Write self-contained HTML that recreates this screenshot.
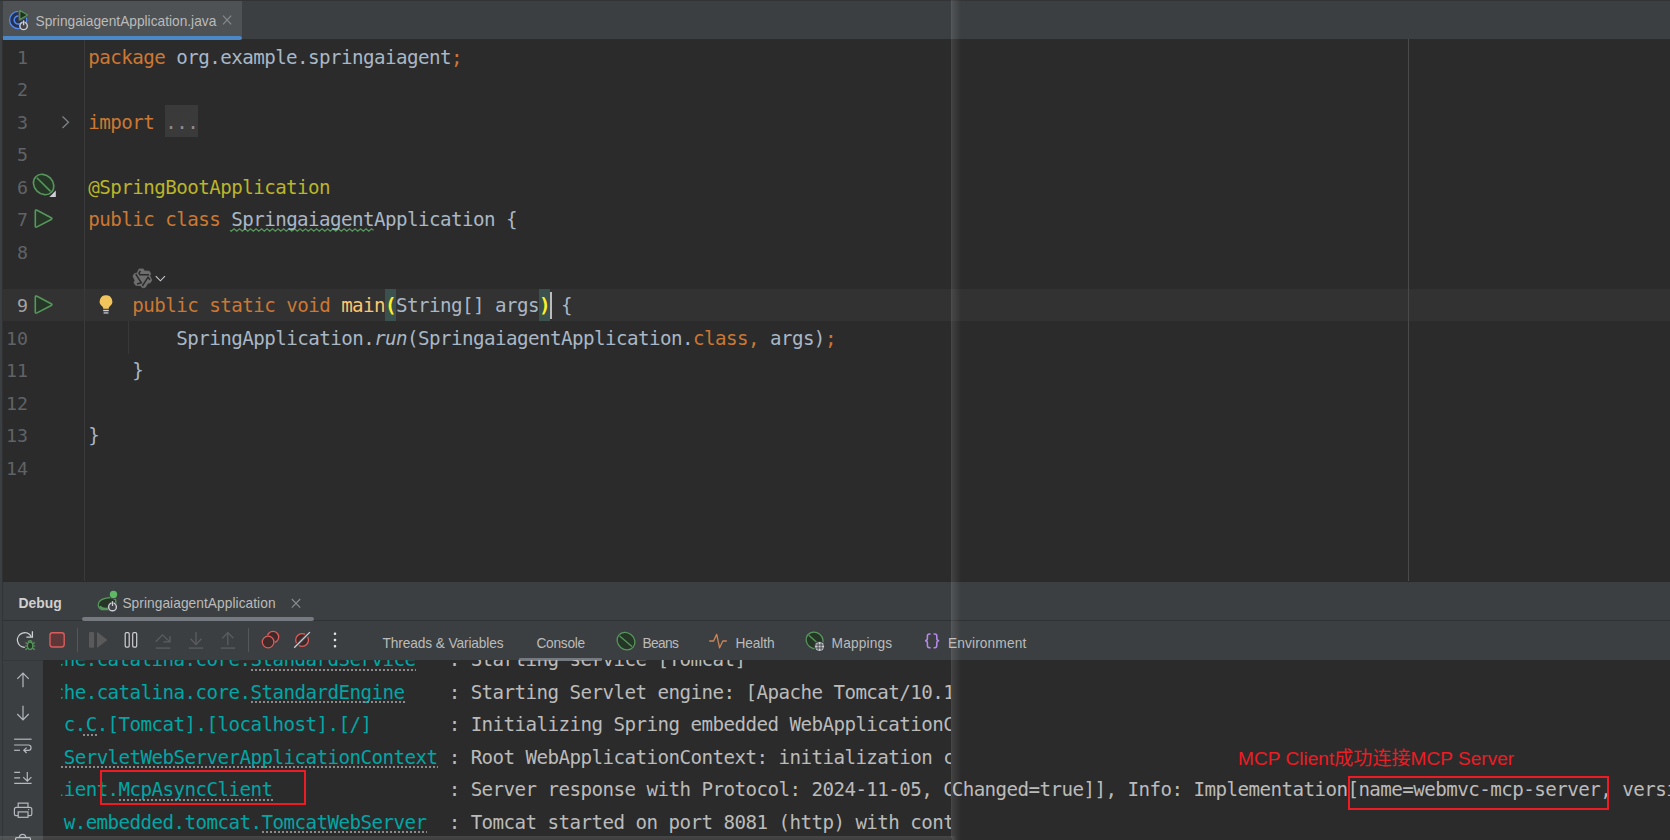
<!DOCTYPE html>
<html lang="en">
<head>
<meta charset="utf-8">
<title>SpringaiagentApplication</title>
<style>
html,body{margin:0;padding:0;}
body{width:1670px;height:840px;overflow:hidden;background:#2b2b2b;position:relative;font-family:"Liberation Sans","Noto Sans CJK SC",sans-serif;}
#root{position:absolute;left:0;top:0;width:1670px;height:840px;overflow:hidden;background:#2b2b2b;}
.abs,#root div,#root svg{position:absolute;}
.ui{font-family:"Liberation Sans",sans-serif;color:#bbbbbb;white-space:pre;line-height:18px;height:18px;}
.code,.ln,.con{font-family:"DejaVu Sans Mono","Liberation Mono",monospace;font-size:18.27px;line-height:32px;height:32px;white-space:pre;}
.code,.con{font-size:19.2px;letter-spacing:-0.559px;}
.code{color:#a9b7c6;z-index:2;}
.ln{color:#606366;width:22px;left:6px;text-align:right;}
.con{color:#bbbbbb;}
.k{color:#cc7832;}
.an{color:#bbb529;}
.fn{color:#ffc66d;}
.it{font-style:italic;}
.pb{color:#ffef28;font-weight:bold;}
.cy{color:#00a6a6;}
.dot{height:2px;background-image:repeating-linear-gradient(90deg,#8a8a8a 0,#8a8a8a 2px,transparent 2px,transparent 4px);}
svg{overflow:visible;}
</style>
</head>
<body>
<div id="root">

<!-- ===== TAB BAR ===== -->
<div style="left:0;top:0;width:1670px;height:39px;background:#3c3f41;"></div>
<div style="left:0;top:0;width:1670px;height:1px;background:#323435;"></div>
<div style="left:3px;top:1px;width:239px;height:35px;background:#4e5254;"></div>
<div id="tabul" style="left:3px;top:36px;width:239px;height:4px;background:#4a88c7;border-radius:0 2px 2px 0;z-index:3;"></div>
<div class="ui" id="t_tab" style="left:35.5px;top:13px;font-size:13.72px;color:#bbbbbb;">SpringaiagentApplication.java</div>
<svg style="left:0;top:0;" width="250" height="40" viewBox="0 0 250 40">
  <!-- class icon -->
  <circle cx="18.2" cy="20" r="8.6" fill="#25324d" stroke="#548af7" stroke-width="1.3"/>
  <path d="M21.6 17.6 A4.1 4.1 0 1 0 21.6 22.4" fill="none" stroke="#548af7" stroke-width="1.5"/>
  <path d="M19.8 10.6 L19.8 19.6 L27.6 15.1 Z" fill="#4e5254" stroke="#4e5254" stroke-width="3.2" stroke-linejoin="round"/>
  <path d="M19.8 10.6 L19.8 19.6 L27.6 15.1 Z" fill="#20301f" stroke="#57965c" stroke-width="1.2" stroke-linejoin="round"/>
  <circle cx="23.6" cy="25.9" r="4.6" fill="#4e5254"/>
  <circle cx="23.6" cy="25.9" r="3.7" fill="#43454a" stroke="#ced0d6" stroke-width="1.4"/>
  <rect x="22.6" y="20.2" width="2" height="5.2" fill="#4e5254"/>
  <path d="M23.6 20.4 L23.6 25.2" stroke="#ced0d6" stroke-width="1.3"/>
  <!-- close -->
  <path d="M223 15.6 L231.2 24.4 M231.2 15.6 L223 24.4" stroke="#8a8d8f" stroke-width="1.1" fill="none"/>
</svg>

<!-- ===== EDITOR ===== -->
<div style="left:0;top:39px;width:1670px;height:542px;background:#2b2b2b;"></div>
<div style="left:3px;top:289px;width:1667px;height:32px;background:#323232;"></div>
<div style="left:84px;top:39px;width:1px;height:542px;background:#3a3a3a;"></div>
<div style="left:128px;top:321px;width:1px;height:33px;background:#383838;"></div>
<div style="left:1408px;top:39px;width:1px;height:542px;background:#4a4a4a;"></div>
<!-- line numbers -->
<div class="ln" style="top:41.7px;">1</div>
<div class="ln" style="top:74.2px;">2</div>
<div class="ln" style="top:106.7px;">3</div>
<div class="ln" style="top:139.2px;">5</div>
<div class="ln" style="top:171.7px;">6</div>
<div class="ln" style="top:204.2px;">7</div>
<div class="ln" style="top:236.7px;">8</div>
<div class="ln" style="top:290.2px;color:#a4a3a3;">9</div>
<div class="ln" style="top:322.7px;">10</div>
<div class="ln" style="top:355.2px;">11</div>
<div class="ln" style="top:387.7px;">12</div>
<div class="ln" style="top:420.2px;">13</div>
<div class="ln" style="top:452.7px;">14</div>
<!-- code -->
<div class="code" style="left:88.25px;top:41.5px;"><span class="k">package</span> org.example.springaiagent<span class="k">;</span></div>
<div style="left:165px;top:105px;width:33px;height:32px;background:#3a3a3a;"></div>
<div class="code" style="left:88.25px;top:106.5px;"><span class="k">import</span> <span style="color:#8c8c8c;">...</span></div>
<div class="code" style="left:88.25px;top:171.5px;"><span class="an">@SpringBootApplication</span></div>
<div class="code" style="left:88.25px;top:204.0px;"><span class="k">public class</span> SpringaiagentApplication {</div>
<div style="left:385px;top:289px;width:11px;height:32px;background:#3b514d;"></div>
<div style="left:539px;top:289px;width:11px;height:32px;background:#3b514d;"></div>
<div class="code" style="left:132.25px;top:290.0px;"><span class="k">public static void</span> <span class="fn">main</span><span class="pb">(</span>String[] args<span class="pb">)</span> {</div>
<div style="left:550px;top:292px;width:2px;height:27px;background:#bbbbbb;"></div>
<div class="code" style="left:176.25px;top:322.5px;">SpringApplication.<span class="it">run</span>(SpringaiagentApplication.<span class="k">class,</span> args)<span class="k">;</span></div>
<div class="code" style="left:132.25px;top:355.0px;">}</div>
<div class="code" style="left:88.25px;top:420.0px;">}</div>

<svg style="left:0;top:0;" width="600" height="581" viewBox="0 0 600 581">
  <!-- fold arrow -->
  <path d="M62.5 116.5 L68.5 122.3 L62.5 128" fill="none" stroke="#7f8388" stroke-width="1.3"/>
  <!-- typo wave -->
  <path d="M230 230.3 L231.3 231.3 L234.05 228.8 L236.80 231.3 L239.55 228.8 L242.30 231.3 L245.05 228.8 L247.80 231.3 L250.55 228.8 L253.30 231.3 L256.05 228.8 L258.80 231.3 L261.55 228.8 L264.30 231.3 L267.05 228.8 L269.80 231.3 L272.55 228.8 L275.30 231.3 L278.05 228.8 L280.80 231.3 L283.55 228.8 L286.30 231.3 L289.05 228.8 L291.80 231.3 L294.55 228.8 L297.30 231.3 L300.05 228.8 L302.80 231.3 L305.55 228.8 L308.30 231.3 L311.05 228.8 L313.80 231.3 L316.55 228.8 L319.30 231.3 L322.05 228.8 L324.80 231.3 L327.55 228.8 L330.30 231.3 L333.05 228.8 L335.80 231.3 L338.55 228.8 L341.30 231.3 L344.05 228.8 L346.80 231.3 L349.55 228.8 L352.30 231.3 L355.05 228.8 L357.80 231.3 L360.55 228.8 L363.30 231.3 L366.05 228.8 L368.80 231.3 L371.55 228.8 L373.6 230.4" fill="none" stroke="#59995f" stroke-width="1.2" stroke-linejoin="miter"/>
  <!-- bean gutter icon line 6 -->
  <g>
    <ellipse cx="43.6" cy="184.5" rx="11" ry="9.3" transform="rotate(45 43.6 184.5)" fill="#253627" stroke="#57965c" stroke-width="1.6"/>
    <path d="M36.8 177.8 L50.6 191.4" stroke="#57965c" stroke-width="1.6"/>
    <path d="M55.8 190.4 L55.8 197 L49.4 197 Z" fill="#ced0d6"/>
  </g>
  <!-- run gutter icons -->
  <path d="M35.3 211.2 L35.3 226.0 Q35.3 227.79999999999998 37 226.89999999999998 L51.2 219.5 Q52.8 218.6 51.2 217.7 L37 210.3 Q35.3 209.4 35.3 211.2 Z" fill="#253627" stroke="#57965c" stroke-width="1.6" stroke-linejoin="round"/>
  <path d="M35.3 297.2 L35.3 312.0 Q35.3 313.8 37 312.9 L51.2 305.5 Q52.8 304.6 51.2 303.70000000000005 L37 296.3 Q35.3 295.4 35.3 297.2 Z" fill="#253627" stroke="#57965c" stroke-width="1.6" stroke-linejoin="round"/>
  <!-- bulb -->
  <g>
    <path d="M106 295.2 a6.2 6.2 0 0 1 3.6 11.3 q-0.9 0.7 -0.9 2.3 l-5.4 0 q0 -1.6 -0.9 -2.3 a6.2 6.2 0 0 1 3.6 -11.3 Z" fill="#f2c55c"/>
    <rect x="103.2" y="309.8" width="5.6" height="1.4" fill="#ced0d6"/>
    <rect x="103.6" y="311.9" width="4.8" height="1.9" fill="#9da0a8"/>
  </g>
  <!-- inlay hint icon -->
  <path d="M139 269 L143.3 269 L144.3 271 L149.3 271.2 L150.7 273.7 L149.7 275.7 L151.8 280 L150.3 282.7 L147.7 283.3 L145.3 287.3 L142.3 287.8 L141 285.7 L135.7 285.3 L134 282.7 L135 280.3 L133 276.3 L134.3 273.7 L137.3 273 Z" fill="#6e6e6e" stroke="#6e6e6e" stroke-width="0.8" stroke-linejoin="round"/>
  <g stroke="#2b2b2b" stroke-width="1.5" fill="none" stroke-linejoin="miter">
    <path d="M140.4 270.8 L139 273 L139.8 274.7 L149 274.7"/>
    <path d="M135.8 274.2 L141.3 282.8 L137 284"/>
    <path d="M150 279.8 L148 277.2 L142.4 286"/>
  </g>
  <path d="M155.8 276.2 L160.4 280.8 L165 276.2" fill="none" stroke="#c8cad0" stroke-width="1.1"/>
</svg>

<!-- ===== DEBUG PANEL ===== -->
<div style="left:0;top:581px;width:1670px;height:259px;background:#3c3f41;"></div>
<div style="left:2px;top:581px;width:1668px;height:1px;background:#292a2b;"></div>
<div style="left:43px;top:660px;width:1627px;height:180px;background:#2b2b2b;"></div>
<div style="left:3px;top:620px;width:1667px;height:1px;background:#2f3133;"></div>
<div style="left:3px;top:660px;width:40px;height:1px;background:#35383a;"></div>
<div class="ui" id="t_debug" style="left:18.5px;top:594px;font-size:13.9px;font-weight:bold;color:#d0d0d0;">Debug</div>
<div class="ui" id="t_dtab" style="left:122.4px;top:594.5px;font-size:13.72px;letter-spacing:0.06px;">SpringaiagentApplication</div>
<div style="left:82px;top:617px;width:232px;height:4px;background:#747a80;border-radius:2px;"></div>
<div class="ui" id="t_thr" style="left:382.4px;top:634.7px;font-size:13.72px;letter-spacing:-0.11px;">Threads &amp; Variables</div>
<div class="ui" id="t_con" style="left:536.4px;top:634.7px;font-size:13.72px;letter-spacing:-0.25px;">Console</div>
<div class="ui" id="t_bea" style="left:642.5px;top:634.7px;font-size:13.72px;letter-spacing:-0.66px;">Beans</div>
<div class="ui" id="t_hea" style="left:735.4px;top:634.7px;font-size:13.72px;letter-spacing:-0.08px;">Health</div>
<div class="ui" id="t_map" style="left:831.6px;top:634.7px;font-size:13.72px;letter-spacing:0.14px;">Mappings</div>
<div class="ui" id="t_env" style="left:948px;top:634.7px;font-size:13.72px;letter-spacing:0.12px;">Environment</div>
<div style="left:519px;top:658px;width:83px;height:2.5px;background:#747a80;border-radius:1px;"></div>
<!-- console (left capture) -->
<div id="conL" style="left:61px;top:660px;width:890px;height:180px;overflow:hidden;">
<div class="con cy" style="left:-8.35px;top:-16.0px;">che.catalina.core.StandardService</div>
<div class="dot" style="left:190px;top:8.5px;width:165px;"></div>
<div class="con" style="left:387.65px;top:-16.0px;">: Starting service [Tomcat]</div>
<div class="con cy" style="left:-8.35px;top:16.5px;">che.catalina.core.StandardEngine</div>
<div class="dot" style="left:190px;top:41px;width:154px;"></div>
<div class="con" style="left:387.65px;top:16.5px;">: Starting Servlet engine: [Apache Tomcat/10.1.40]</div>
<div class="con cy" style="left:-8.35px;top:49.0px;">.c.C.[Tomcat].[localhost].[/]</div>
<div class="dot" style="left:22px;top:73.5px;width:14px;"></div>
<div class="con" style="left:387.65px;top:49.0px;">: Initializing Spring embedded WebApplicationContext</div>
<div class="con cy" style="left:-8.35px;top:81.5px;">.ServletWebServerApplicationContext</div>
<div class="dot" style="left:0px;top:106px;width:377px;"></div>
<div class="con" style="left:387.65px;top:81.5px;">: Root WebApplicationContext: initialization completed</div>
<div class="con cy" style="left:-8.35px;top:114.0px;">lient.McpAsyncClient</div>
<div class="dot" style="left:58px;top:138.5px;width:154px;"></div>
<div class="con" style="left:387.65px;top:114.0px;">: Server response with Protocol: 2024-11-05, Capabilities</div>
<div class="con cy" style="left:2.65px;top:146.5px;">w.embedded.tomcat.TomcatWebServer</div>
<div class="dot" style="left:201px;top:171px;width:165px;"></div>
<div class="con" style="left:387.65px;top:146.5px;">: Tomcat started on port 8081 (http) with context path</div>
</div>
<!-- console (right capture) -->
<div id="conR" style="left:951px;top:660px;width:719px;height:180px;overflow:hidden;">
<div class="con" style="left:0.65px;top:114.0px;">Changed=true]], Info: Implementation[name=webmvc-mcp-server, version=1.0.0]</div>
</div>

<!-- annotations -->
<div style="left:100px;top:770px;width:202px;height:31px;border:2px solid #ed1c24;"></div>
<div style="left:1348px;top:775.5px;width:257px;height:30px;border:2px solid #ed1c24;"></div>
<div id="t_red" style="left:1238px;top:746px;font-family:'Liberation Sans','Noto Sans CJK SC',sans-serif;font-size:19.1px;line-height:26px;height:26px;white-space:pre;color:#ed1c24;">MCP Client成功连接MCP Server</div>

<svg style="left:0;top:581px;" width="1100" height="259" viewBox="0 581 1100 259">
  <!-- debug tab icon -->
  <path d="M110.8 597.5 C104.5 598 100.4 598.9 98.9 602.2 C97.5 605.4 98.6 608.5 101.6 609.6 L109 609.6 L116 604.4 L115.6 599.6 Z" fill="#253627" stroke="#57965c" stroke-width="1.3" stroke-linejoin="round"/>
  <path d="M99.8 606.2 C101.6 609.2 104.4 609.3 109.4 608.4" stroke="#57965c" stroke-width="2.2" fill="none"/>
  <circle cx="113.5" cy="594.5" r="4.7" fill="#3c3f41"/>
  <circle cx="113.5" cy="594.5" r="3.7" fill="#5fb865"/>
  <circle cx="112.5" cy="606.9" r="5" fill="#3c3f41"/>
  <circle cx="112.5" cy="606.9" r="3.9" fill="#43454a" stroke="#ced0d6" stroke-width="1.4"/>
  <rect x="111.4" y="600.8" width="2.2" height="5.4" fill="#3c3f41"/>
  <path d="M112.5 601.2 L112.5 606" stroke="#ced0d6" stroke-width="1.3"/>
  <path d="M291.8 599 L300.2 607.6 M300.2 599 L291.8 607.6" stroke="#8a8d90" stroke-width="1.1" fill="none"/>

  <!-- rerun -->
  <path d="M24.8 647.3 A7.3 7.3 0 1 1 31.2 636.6" fill="none" stroke="#ced0d6" stroke-width="1.3"/>
  <path d="M32.4 631.2 L32.4 637.2 L26.4 637.2" fill="none" stroke="#ced0d6" stroke-width="1.3"/>
  <g stroke="#57965c" stroke-width="1.2" fill="none">
    <path d="M25.4 642.6 L27.6 644 M25 646 L27.4 646 M25.4 649.8 L27.6 648 M34.8 642.6 L32.6 644 M35.2 646 L32.8 646 M34.8 649.8 L32.6 648"/>
    <path d="M28.2 642 A2 2 0 0 1 32 642"/>
  </g>
  <ellipse cx="30.1" cy="645.8" rx="2.7" ry="3.6" fill="#253627" stroke="#57965c" stroke-width="1.3"/>
  <!-- stop -->
  <rect x="50" y="632.8" width="14.2" height="14.2" rx="2.4" fill="#5e3838" stroke="#db5c5c" stroke-width="1.4"/>
  <rect x="77" y="628" width="1" height="24" fill="#55585a"/>
  <!-- resume (disabled) -->
  <rect x="89" y="632.1" width="5.1" height="15.6" rx="1.2" fill="#5a5a5a"/>
  <path d="M97 633 Q97 632 98 632.6 L106.8 639.4 Q107.4 640 106.8 640.5 L98 647.3 Q97 647.9 97 646.9 Z" fill="#5a5a5a"/>
  <!-- pause -->
  <rect x="125.2" y="632.7" width="4" height="14.4" rx="1.4" fill="#34363a" stroke="#ced0d6" stroke-width="1.2"/>
  <rect x="132.7" y="632.7" width="4" height="14.4" rx="1.4" fill="#34363a" stroke="#ced0d6" stroke-width="1.2"/>
  <!-- step over/into/out (disabled) -->
  <g stroke="#5b5d5f" stroke-width="1.3" fill="none">
    <path d="M155.8 641.8 L162.5 634.9 L169.6 641.6"/>
    <path d="M170 636 L170 641.8 L163.4 641.8"/>
    <path d="M155.7 648.1 L170.4 648.1"/>
    <path d="M196 632 L196 644.6"/>
    <path d="M190.6 638.8 L196 644.6 L201.4 638.8"/>
    <path d="M188.8 648.1 L203.2 648.1"/>
    <path d="M227.8 632.6 L227.8 645"/>
    <path d="M222.4 638.2 L227.8 632.6 L233.4 638.2"/>
    <path d="M220.8 648.1 L235.1 648.1"/>
  </g>
  <rect x="248" y="628" width="1" height="24" fill="#55585a"/>
  <!-- view breakpoints -->
  <circle cx="273" cy="637" r="5.7" fill="#402929" stroke="#db5c5c" stroke-width="1.3"/>
  <circle cx="268.1" cy="642" r="7" fill="#3c3f41"/>
  <circle cx="268.1" cy="642" r="5.8" fill="#402929" stroke="#db5c5c" stroke-width="1.3"/>
  <!-- mute breakpoints -->
  <circle cx="302.1" cy="640" r="6.4" fill="#402929" stroke="#db5c5c" stroke-width="1.3"/>
  <path d="M294.2 647.7 L309.9 632.1" stroke="#3c3f41" stroke-width="3.6"/>
  <path d="M294.2 647.7 L309.9 632.1" stroke="#ced0d6" stroke-width="1.3"/>
  <!-- kebab -->
  <g fill="#dfe1e5">
    <rect x="333.8" y="632.6" width="2.4" height="2.4" rx="0.8"/>
    <rect x="333.8" y="638.8" width="2.4" height="2.4" rx="0.8"/>
    <rect x="333.8" y="645.1" width="2.4" height="2.4" rx="0.8"/>
  </g>

  <!-- beans -->
  <ellipse cx="626" cy="641.1" rx="9.4" ry="8.2" transform="rotate(40 626 641.1)" fill="#253627" stroke="#57965c" stroke-width="1.3"/>
  <path d="M619.6 636 L632 646.6" stroke="#57965c" stroke-width="1.3"/>
  <!-- health -->
  <path d="M709.2 641 L713.6 641 L716.7 634.4 L719.6 647.8 L722.8 641 L726.8 641" fill="none" stroke="#c9855a" stroke-width="1.3" stroke-linejoin="round"/>
  <!-- mappings -->
  <ellipse cx="814.6" cy="640.4" rx="8.8" ry="8" transform="rotate(40 814.6 640.4)" fill="#253627" stroke="#57965c" stroke-width="1.3"/>
  <path d="M808.8 635.2 L818 643.6" stroke="#57965c" stroke-width="1.3"/>
  <circle cx="819.6" cy="646.5" r="5.6" fill="#3c3f41"/>
  <circle cx="819.6" cy="646.5" r="4.5" fill="#ced0d6"/>
  <path d="M815.4 645 L823.8 645 M815.4 648 L823.8 648 M818.1 642.4 L818.1 650.6 M821.1 642.4 L821.1 650.6" stroke="#3c3f41" stroke-width="0.9"/>
  <!-- environment -->
  <g fill="none" stroke="#b589ec" stroke-width="1.55">
    <path d="M930.6 633.9 L929.4 633.9 Q927.4 633.9 927.4 636 L927.4 638.6 Q927.4 640.8 925 640.8 Q927.4 640.8 927.4 643 L927.4 645.6 Q927.4 647.8 929.4 647.8 L930.6 647.8"/>
    <path d="M933.6 633.9 L934.8 633.9 Q936.8 633.9 936.8 636 L936.8 638.6 Q936.8 640.8 939.2 640.8 Q936.8 640.8 936.8 643 L936.8 645.6 Q936.8 647.8 934.8 647.8 L933.6 647.8"/>
  </g>

  <!-- left console toolbar -->
  <g fill="none" stroke="#b4b8bf" stroke-width="1.2">
    <path d="M23 673 L23 687.2 M17.3 678.9 L23 673 L28.7 678.9"/>
    <path d="M23 705.7 L23 720 M17.3 714 L23 720 L28.7 714"/>
    <path d="M14.1 739.2 L31.6 739.2"/>
    <path d="M14.1 745 L28.4 745 A2.65 2.65 0 0 1 28.4 750.3 L24 750.3"/>
    <path d="M26.6 747.6 L23.8 750.3 L26.6 753"/>
    <path d="M14.1 750.3 L20 750.3"/>
    <path d="M14.2 772.4 L20.1 772.4 M14.2 777.8 L20.1 777.8 M14.2 783.3 L31.6 783.3"/>
    <path d="M27.3 771.9 L27.3 781.1 M23.2 777.1 L27.3 781.1 L31.4 777.1"/>
    <path d="M18.2 807.3 L18.2 803.2 L28 803.2 L28 807.3"/>
    <path d="M18.2 815.6 L16 815.6 Q14.4 815.6 14.4 814 L14.4 809.4 Q14.4 807.4 16.4 807.4 L29.8 807.4 Q31.8 807.4 31.8 809.4 L31.8 814 Q31.8 815.6 30.2 815.6 L28 815.6"/>
    <rect x="18.2" y="811.9" width="9.8" height="5.4"/>
    <path d="M19.4 837.6 Q19.4 834.4 22.5 834.4 Q25.8 834.4 25.8 837.6"/>
    <rect x="15.6" y="837.6" width="14.8" height="4" rx="1"/>
  </g>
  <circle cx="28.6" cy="809.6" r="0.7" fill="#b4b8bf"/>
</svg>

<!-- ===== window edges / stitched-capture seam ===== -->
<div style="left:0;top:39px;width:2px;height:801px;background:#3c3f41;"></div>
<div style="left:2px;top:39px;width:1px;height:542px;background:#34373a;opacity:.55;"></div>
<div style="left:2px;top:581px;width:1px;height:259px;background:#323537;"></div>
<div style="left:0;top:836px;width:951px;height:4px;background:linear-gradient(180deg,rgba(255,255,255,.13),rgba(255,255,255,.09));"></div>
<div style="left:951px;top:0;width:1px;height:838px;background:rgba(255,255,255,.13);"></div>
<div style="left:952px;top:0;width:9px;height:840px;background:linear-gradient(90deg,rgba(255,255,255,.10),rgba(255,255,255,0));"></div>
<div style="left:951px;top:836px;width:6px;height:4px;background:linear-gradient(90deg,rgba(255,255,255,.10),rgba(255,255,255,0));"></div>
</div>
</body>
</html>
